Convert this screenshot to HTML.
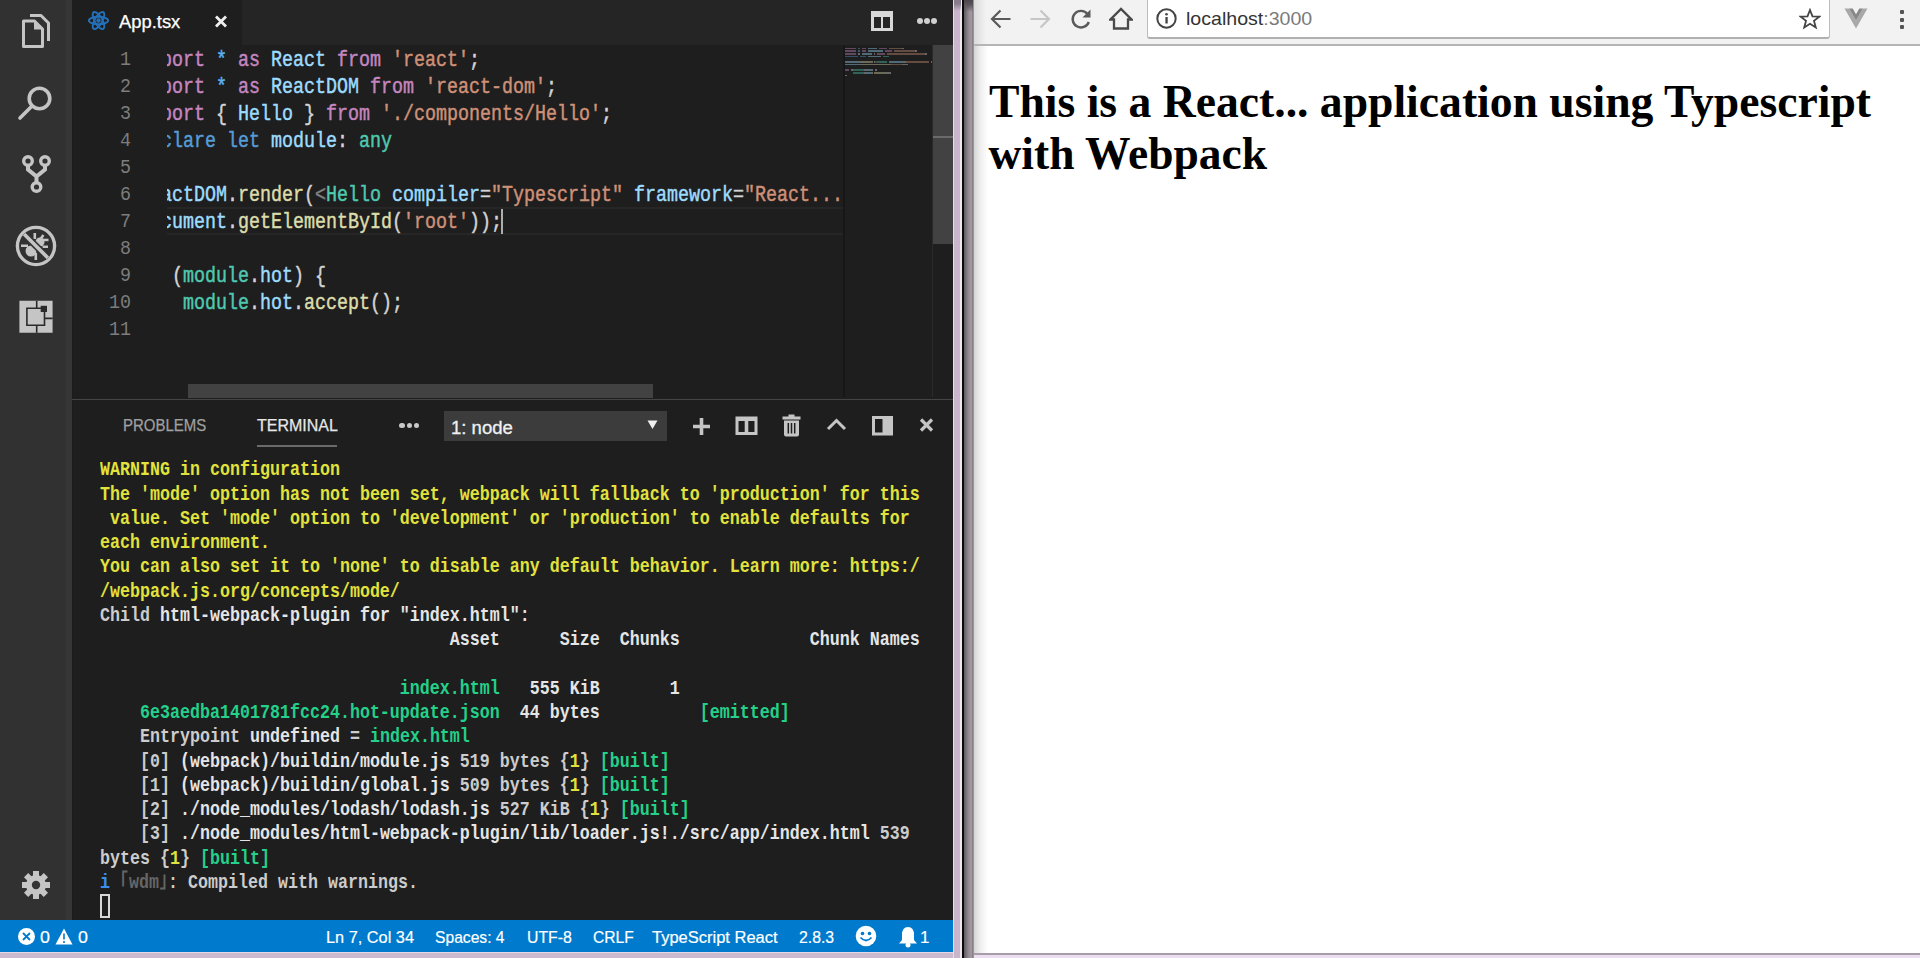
<!DOCTYPE html>
<html><head><meta charset="utf-8"><style>*{margin:0;padding:0;box-sizing:border-box}
html,body{width:1920px;height:958px;overflow:hidden;background:#d6c6da}
.a{position:absolute}
.k{color:#c586c0}.b{color:#569cd6}.v{color:#9cdcfe}.s{color:#ce9178}.p{color:#d4d4d4}.t{color:#4ec9b0}.f{color:#dcdcaa}.g{color:#808080}.o{color:#5cb0f0}
.y{color:#e2e23c}.gr{color:#23d18b}.w{color:#e5e5e5}.n{color:#cccccc}.bl{color:#3b8eea}.dg{color:#666666}
</style></head><body>
<div class="a" style="left:0;top:0;width:953px;height:952px;background:#1e1e1e;overflow:hidden">
<div class="a" style="left:0px;top:0px;width:66px;height:920px;background:#333333;"></div>
<div class="a" style="left:0px;top:0px;width:66px;height:920px;background:#313131;"></div>
<div class="a" style="left:66px;top:0px;width:6px;height:920px;background:#363636;"></div>
<div class="a" style="left:72px;top:45px;width:1px;height:875px;background:#1b1b1b;"></div>
<div class="a" style="left:72px;top:0px;width:881px;height:45px;background:#252526;"></div>
<div class="a" style="left:72px;top:0px;width:170px;height:45px;background:#1e1e1e;"></div>
<div class="a" style="left:120.00px;top:51.76px;font:400 18.333px/18.333px 'Liberation Mono',monospace;color:#7d7d7d;white-space:pre;transform:scale(1.0,1.1);transform-origin:0 14.04px;">1</div>
<div class="a" style="left:120.00px;top:78.76px;font:400 18.333px/18.333px 'Liberation Mono',monospace;color:#7d7d7d;white-space:pre;transform:scale(1.0,1.1);transform-origin:0 14.04px;">2</div>
<div class="a" style="left:120.00px;top:105.76px;font:400 18.333px/18.333px 'Liberation Mono',monospace;color:#7d7d7d;white-space:pre;transform:scale(1.0,1.1);transform-origin:0 14.04px;">3</div>
<div class="a" style="left:120.00px;top:132.76px;font:400 18.333px/18.333px 'Liberation Mono',monospace;color:#7d7d7d;white-space:pre;transform:scale(1.0,1.1);transform-origin:0 14.04px;">4</div>
<div class="a" style="left:120.00px;top:159.76px;font:400 18.333px/18.333px 'Liberation Mono',monospace;color:#7d7d7d;white-space:pre;transform:scale(1.0,1.1);transform-origin:0 14.04px;">5</div>
<div class="a" style="left:120.00px;top:186.76px;font:400 18.333px/18.333px 'Liberation Mono',monospace;color:#7d7d7d;white-space:pre;transform:scale(1.0,1.1);transform-origin:0 14.04px;">6</div>
<div class="a" style="left:120.00px;top:213.76px;font:400 18.333px/18.333px 'Liberation Mono',monospace;color:#7d7d7d;white-space:pre;transform:scale(1.0,1.1);transform-origin:0 14.04px;">7</div>
<div class="a" style="left:120.00px;top:240.76px;font:400 18.333px/18.333px 'Liberation Mono',monospace;color:#7d7d7d;white-space:pre;transform:scale(1.0,1.1);transform-origin:0 14.04px;">8</div>
<div class="a" style="left:120.00px;top:267.76px;font:400 18.333px/18.333px 'Liberation Mono',monospace;color:#7d7d7d;white-space:pre;transform:scale(1.0,1.1);transform-origin:0 14.04px;">9</div>
<div class="a" style="left:109.00px;top:294.76px;font:400 18.333px/18.333px 'Liberation Mono',monospace;color:#7d7d7d;white-space:pre;transform:scale(1.0,1.1);transform-origin:0 14.04px;">10</div>
<div class="a" style="left:109.00px;top:321.76px;font:400 18.333px/18.333px 'Liberation Mono',monospace;color:#7d7d7d;white-space:pre;transform:scale(1.0,1.1);transform-origin:0 14.04px;">11</div>
<div class="a" style="left:167px;top:207px;width:676px;height:2px;background:#262626;"></div>
<div class="a" style="left:167px;top:233px;width:676px;height:2px;background:#262626;"></div>
<div class="a" style="left:167px;top:45px;width:676px;height:339px;overflow:hidden">
<div class="a" style="left:-28.00px;top:8.36px;font:400 18.333px/18.333px 'Liberation Mono',monospace;color:#d4d4d4;white-space:pre;transform:scale(1.0,1.17);transform-origin:0 14.04px;-webkit-text-stroke:0.4px currentColor;"><span class="k">import</span> <span class="o">*</span> <span class="k">as</span> <span class="v">React</span> <span class="k">from</span> <span class="s">'react'</span><span class="p">;</span></div>
<div class="a" style="left:-28.00px;top:35.36px;font:400 18.333px/18.333px 'Liberation Mono',monospace;color:#d4d4d4;white-space:pre;transform:scale(1.0,1.17);transform-origin:0 14.04px;-webkit-text-stroke:0.4px currentColor;"><span class="k">import</span> <span class="o">*</span> <span class="k">as</span> <span class="v">ReactDOM</span> <span class="k">from</span> <span class="s">'react-dom'</span><span class="p">;</span></div>
<div class="a" style="left:-28.00px;top:62.36px;font:400 18.333px/18.333px 'Liberation Mono',monospace;color:#d4d4d4;white-space:pre;transform:scale(1.0,1.17);transform-origin:0 14.04px;-webkit-text-stroke:0.4px currentColor;"><span class="k">import</span> <span class="p">{</span> <span class="v">Hello</span> <span class="p">}</span> <span class="k">from</span> <span class="s">'./components/Hello'</span><span class="p">;</span></div>
<div class="a" style="left:-28.00px;top:89.36px;font:400 18.333px/18.333px 'Liberation Mono',monospace;color:#d4d4d4;white-space:pre;transform:scale(1.0,1.17);transform-origin:0 14.04px;-webkit-text-stroke:0.4px currentColor;"><span class="b">declare</span> <span class="b">let</span> <span class="v">module</span><span class="p">:</span> <span class="t">any</span></div>
<div class="a" style="left:-28.00px;top:116.36px;font:400 18.333px/18.333px 'Liberation Mono',monospace;color:#d4d4d4;white-space:pre;transform:scale(1.0,1.17);transform-origin:0 14.04px;-webkit-text-stroke:0.4px currentColor;"></div>
<div class="a" style="left:-28.00px;top:143.36px;font:400 18.333px/18.333px 'Liberation Mono',monospace;color:#d4d4d4;white-space:pre;transform:scale(1.0,1.17);transform-origin:0 14.04px;-webkit-text-stroke:0.4px currentColor;"><span class="v">ReactDOM</span><span class="p">.</span><span class="f">render</span><span class="p">(</span><span class="g">&lt;</span><span class="t">Hello</span> <span class="v">compiler</span><span class="p">=</span><span class="s">"Typescript"</span> <span class="v">framework</span><span class="p">=</span><span class="s">"React..."</span> <span class="g">/&gt;</span><span class="p">,</span></div>
<div class="a" style="left:-28.00px;top:170.36px;font:400 18.333px/18.333px 'Liberation Mono',monospace;color:#d4d4d4;white-space:pre;transform:scale(1.0,1.17);transform-origin:0 14.04px;-webkit-text-stroke:0.4px currentColor;"><span class="v">document</span><span class="p">.</span><span class="f">getElementById</span><span class="p">(</span><span class="s">'root'</span><span class="p">));</span></div>
<div class="a" style="left:-28.00px;top:197.36px;font:400 18.333px/18.333px 'Liberation Mono',monospace;color:#d4d4d4;white-space:pre;transform:scale(1.0,1.17);transform-origin:0 14.04px;-webkit-text-stroke:0.4px currentColor;"></div>
<div class="a" style="left:-28.00px;top:224.36px;font:400 18.333px/18.333px 'Liberation Mono',monospace;color:#d4d4d4;white-space:pre;transform:scale(1.0,1.17);transform-origin:0 14.04px;-webkit-text-stroke:0.4px currentColor;"><span class="k">if</span> <span class="p">(</span><span class="t">module</span><span class="p">.</span><span class="v">hot</span><span class="p">)</span> <span class="p">{</span></div>
<div class="a" style="left:-28.00px;top:251.36px;font:400 18.333px/18.333px 'Liberation Mono',monospace;color:#d4d4d4;white-space:pre;transform:scale(1.0,1.17);transform-origin:0 14.04px;-webkit-text-stroke:0.4px currentColor;">    <span class="t">module</span><span class="p">.</span><span class="v">hot</span><span class="p">.</span><span class="f">accept</span><span class="p">();</span></div>
<div class="a" style="left:-28.00px;top:278.36px;font:400 18.333px/18.333px 'Liberation Mono',monospace;color:#d4d4d4;white-space:pre;transform:scale(1.0,1.17);transform-origin:0 14.04px;-webkit-text-stroke:0.4px currentColor;"><span class="p">}</span></div>
</div>
<div class="a" style="left:501px;top:209px;width:2px;height:25px;background:#aeafad;"></div>
<div class="a" style="left:843px;top:45px;width:2px;height:352px;background:#171717;"></div>
<div class="a" style="left:932px;top:45px;width:1px;height:352px;background:#2a2a2a;"></div>
<div class="a" style="left:933px;top:45px;width:20px;height:199px;background:#424242;"></div>
<div class="a" style="left:933px;top:136px;width:20px;height:2px;background:#6a6a6a;"></div>
<div class="a" style="left:188px;top:384px;width:465px;height:14px;background:#424242;"></div>
<div class="a" style="left:72px;top:399px;width:881px;height:1px;background:#454545;"></div>
<div class="a" style="left:0px;top:920px;width:953px;height:32px;background:#007acc;"></div>
<div class="a" style="left:118.50px;top:14.48px;font:400 17.5px/17.5px 'Liberation Sans',sans-serif;color:#ffffff;white-space:pre;transform:scale(1.05,1.0);transform-origin:0 14.82px;-webkit-text-stroke:0.25px currentColor;">App.tsx</div>
<svg class="a" style="left:87px;top:10px" width="23" height="21" viewBox="-11.5 -10.5 23 21"><g fill="none" stroke="#2470b8" stroke-width="1.9"><ellipse rx="9.6" ry="3.8"/><ellipse rx="9.6" ry="3.8" transform="rotate(60)"/><ellipse rx="9.6" ry="3.8" transform="rotate(120)"/></g><circle r="2.2" fill="#2470b8"/></svg>
<svg class="a" style="left:214px;top:15px" width="14" height="13" viewBox="0 0 14 13"><path d="M2 1.5L12 11.5M12 1.5L2 11.5" stroke="#f0f0f0" stroke-width="2.8"/></svg>
<svg class="a" style="left:871px;top:11px" width="22" height="20" viewBox="0 0 22 20"><path fill="#d8d8d8" fill-rule="evenodd" d="M0 0H22V20H0Z M3 6H10V17H3Z M12 6H19V17H12Z"/></svg>
<div class="a" style="left:916.5px;top:17.5px;width:6px;height:6px;background:#d0d0d0;border-radius:50%;"></div>
<div class="a" style="left:923.8px;top:17.5px;width:6px;height:6px;background:#d0d0d0;border-radius:50%;"></div>
<div class="a" style="left:931px;top:17.5px;width:6px;height:6px;background:#d0d0d0;border-radius:50%;"></div>
<svg class="a" style="left:18px;top:10px" width="36" height="42" viewBox="0 0 36 42"><g fill="none" stroke="#c5c5c5" stroke-width="3" stroke-linejoin="round"><path d="M5.5 11H16.5L24.5 19V36.5H5.5Z"/><path d="M12 5.5H23L30.5 13V31"/></g><path d="M16 11V19.5H24.5Z" fill="#c5c5c5"/></svg>
<svg class="a" style="left:16px;top:83px" width="40" height="40" viewBox="0 0 40 40"><g fill="none" stroke="#c5c5c5" stroke-width="3.6" stroke-linecap="round"><circle cx="23.5" cy="15.5" r="10.3"/><path d="M16 23L4 35"/></g></svg>
<svg class="a" style="left:20px;top:153px" width="34" height="44" viewBox="0 0 34 44"><g fill="none" stroke="#c5c5c5" stroke-width="3.4"><circle cx="8" cy="8" r="4.3"/><circle cx="25" cy="8" r="4.3"/><circle cx="16.5" cy="34" r="4.3"/></g><path d="M8 12.3V16.5L16.5 23.5V29.7M25 12.3V16.5L16.5 23.5" fill="none" stroke="#c5c5c5" stroke-width="4"/></svg>
<svg class="a" style="left:13px;top:223px" width="46" height="46" viewBox="-23 -23 46 46"><defs><clipPath id="dbgc"><circle r="16.8"/></clipPath></defs><circle r="18.6" fill="none" stroke="#c5c5c5" stroke-width="3.4"/><g fill="#c5c5c5"><ellipse cx="-5" cy="5" rx="5.5" ry="5.5"/><ellipse cx="4" cy="-4" rx="4.5" ry="4.5"/><rect x="-2.5" y="-13" width="2.6" height="6"/><rect x="4.5" y="-11.5" width="2.6" height="5.5" transform="rotate(35 5.8 -8.7)"/><rect x="7" y="-7.3" width="5.5" height="2.5"/><rect x="6.5" y="-0.5" width="5.5" height="2.5"/><rect x="-1.5" y="7" width="2.6" height="7"/><rect x="-15" y="-1.5" width="7" height="2.5"/></g><g clip-path="url(#dbgc)"><path d="M-16 -16L16 16" stroke="#333" stroke-width="6.8"/><path d="M-16 -16L16 16" stroke="#c5c5c5" stroke-width="3.6"/></g></svg>
<svg class="a" style="left:18px;top:299px" width="36" height="36" viewBox="0 0 36 36"><path fill="#c5c5c5" d="M1.4 1.8H34.6V33.8H1.4Z"/><g stroke="#2a2a2a" stroke-width="1.6" fill="none"><path d="M18.7 1.8V9.3M18.7 26.3V33.8M26.5 19.4H34.6"/><path d="M8.9 9.3H26.5V26.3H8.9Z"/></g><path fill="#2a2a2a" d="M22.7 6.8H29V13H22.7Z"/></svg>
<svg class="a" style="left:21px;top:870px" width="30" height="30" viewBox="-15 -15 30 30"><g fill="#c5c5c5"><circle r="10"/><rect x="-3" y="-14" width="6" height="7" transform="rotate(0)"/><rect x="-3" y="-14" width="6" height="7" transform="rotate(45)"/><rect x="-3" y="-14" width="6" height="7" transform="rotate(90)"/><rect x="-3" y="-14" width="6" height="7" transform="rotate(135)"/><rect x="-3" y="-14" width="6" height="7" transform="rotate(180)"/><rect x="-3" y="-14" width="6" height="7" transform="rotate(225)"/><rect x="-3" y="-14" width="6" height="7" transform="rotate(270)"/><rect x="-3" y="-14" width="6" height="7" transform="rotate(315)"/></g><circle r="4.2" fill="#333"/></svg>
<div class="a" style="left:123.00px;top:417.11px;font:400 17px/17px 'Liberation Sans',sans-serif;color:#a0a0a0;white-space:pre;transform:scale(0.88,1.0);transform-origin:0 14.39px;-webkit-text-stroke:0.25px currentColor;">PROBLEMS</div>
<div class="a" style="left:257.00px;top:417.11px;font:400 17px/17px 'Liberation Sans',sans-serif;color:#e7e7e7;white-space:pre;transform:scale(0.94,1.0);transform-origin:0 14.39px;-webkit-text-stroke:0.25px currentColor;">TERMINAL</div>
<div class="a" style="left:257px;top:445px;width:80px;height:1.5px;background:#6a6a6a;"></div>
<div class="a" style="left:399.2px;top:422.5px;width:5.6px;height:5.6px;background:#c8c8c8;border-radius:50%;"></div>
<div class="a" style="left:406.5px;top:422.5px;width:5.6px;height:5.6px;background:#c8c8c8;border-radius:50%;"></div>
<div class="a" style="left:413.8px;top:422.5px;width:5.6px;height:5.6px;background:#c8c8c8;border-radius:50%;"></div>
<div class="a" style="left:444px;top:411px;width:223px;height:30px;background:#3c3c3c;"></div>
<div class="a" style="left:451.00px;top:419.58px;font:400 17.5px/17.5px 'Liberation Sans',sans-serif;color:#f0f0f0;white-space:pre;transform:scale(1.06,1.0);transform-origin:0 14.82px;-webkit-text-stroke:0.3px currentColor;">1: node</div>
<svg class="a" style="left:647px;top:420px" width="11" height="10" viewBox="0 0 11 10"><path d="M0.5 0.5H10.5L5.5 9Z" fill="#f0f0f0"/></svg>
<svg class="a" style="left:692px;top:417px" width="19" height="19" viewBox="0 0 19 19"><path d="M9.5 1V18M1 9.5H18" stroke="#c5c5c5" stroke-width="3.6"/></svg>
<svg class="a" style="left:735px;top:416px" width="23" height="20" viewBox="0 0 23 20"><path fill="#c5c5c5" fill-rule="evenodd" d="M0.5 0.5H22.5V19H0.5Z M3.5 5H9.7V16H3.5Z M13.3 5H19.5V16H13.3Z"/></svg>
<svg class="a" style="left:782px;top:414px" width="19" height="23" viewBox="0 0 19 23"><path fill="#c5c5c5" d="M6.5 0.5H12.5V2.5H18.5V5.5H0.5V2.5H6.5Z M2 6.5H17V20.5Q17 22.5 15 22.5H4Q2 22.5 2 20.5Z"/><path d="M6.3 9V19.5M9.5 9V19.5M12.7 9V19.5" stroke="#1e1e1e" stroke-width="1.5"/></svg>
<svg class="a" style="left:826px;top:416px" width="21" height="15" viewBox="0 0 21 15"><path d="M2 13L10.5 4.5L19 13" fill="none" stroke="#c5c5c5" stroke-width="3"/></svg>
<svg class="a" style="left:872px;top:416px" width="21" height="20" viewBox="0 0 21 20"><path fill="#c5c5c5" fill-rule="evenodd" d="M0 0H21V19.5H0Z M3 3H10.5V16.5H3Z"/></svg>
<svg class="a" style="left:919px;top:418px" width="15" height="14" viewBox="0 0 15 14"><path d="M2 1.5L13 12.5M13 1.5L2 12.5" stroke="#c5c5c5" stroke-width="3.2"/></svg>
<div class="a" style="left:100.00px;top:463.43px;font:700 16.667px/16.667px 'Liberation Mono',monospace;color:#cccccc;white-space:pre;transform:scale(1.0,1.18);transform-origin:0 12.77px;"><span class="y">WARNING in configuration</span></div>
<div class="a" style="left:100.00px;top:487.69px;font:700 16.667px/16.667px 'Liberation Mono',monospace;color:#cccccc;white-space:pre;transform:scale(1.0,1.18);transform-origin:0 12.77px;"><span class="y">The 'mode' option has not been set, webpack will fallback to 'production' for this</span></div>
<div class="a" style="left:100.00px;top:511.95px;font:700 16.667px/16.667px 'Liberation Mono',monospace;color:#cccccc;white-space:pre;transform:scale(1.0,1.18);transform-origin:0 12.77px;"><span class="y"> value. Set 'mode' option to 'development' or 'production' to enable defaults for</span></div>
<div class="a" style="left:100.00px;top:536.21px;font:700 16.667px/16.667px 'Liberation Mono',monospace;color:#cccccc;white-space:pre;transform:scale(1.0,1.18);transform-origin:0 12.77px;"><span class="y">each environment.</span></div>
<div class="a" style="left:100.00px;top:560.47px;font:700 16.667px/16.667px 'Liberation Mono',monospace;color:#cccccc;white-space:pre;transform:scale(1.0,1.18);transform-origin:0 12.77px;"><span class="y">You can also set it to 'none' to disable any default behavior. Learn more: https:/</span></div>
<div class="a" style="left:100.00px;top:584.73px;font:700 16.667px/16.667px 'Liberation Mono',monospace;color:#cccccc;white-space:pre;transform:scale(1.0,1.18);transform-origin:0 12.77px;"><span class="y">/webpack.js.org/concepts/mode/</span></div>
<div class="a" style="left:100.00px;top:608.99px;font:700 16.667px/16.667px 'Liberation Mono',monospace;color:#cccccc;white-space:pre;transform:scale(1.0,1.18);transform-origin:0 12.77px;"><span class="n">Child </span><span class="w">html-webpack-plugin for "index.html":</span></div>
<div class="a" style="left:100.00px;top:633.25px;font:700 16.667px/16.667px 'Liberation Mono',monospace;color:#cccccc;white-space:pre;transform:scale(1.0,1.18);transform-origin:0 12.77px;"><span class="w">                                   Asset      Size  Chunks             Chunk Names</span></div>
<div class="a" style="left:100.00px;top:681.77px;font:700 16.667px/16.667px 'Liberation Mono',monospace;color:#cccccc;white-space:pre;transform:scale(1.0,1.18);transform-origin:0 12.77px;"><span class="gr">                              index.html</span><span class="w">   555 KiB       1</span></div>
<div class="a" style="left:100.00px;top:706.03px;font:700 16.667px/16.667px 'Liberation Mono',monospace;color:#cccccc;white-space:pre;transform:scale(1.0,1.18);transform-origin:0 12.77px;"><span class="gr">    6e3aedba1401781fcc24.hot-update.json</span><span class="w">  44 bytes          </span><span class="gr">[emitted]</span></div>
<div class="a" style="left:100.00px;top:730.29px;font:700 16.667px/16.667px 'Liberation Mono',monospace;color:#cccccc;white-space:pre;transform:scale(1.0,1.18);transform-origin:0 12.77px;"><span class="n">    Entrypoint </span><span class="w">undefined</span><span class="n"> = </span><span class="gr">index.html</span></div>
<div class="a" style="left:100.00px;top:754.55px;font:700 16.667px/16.667px 'Liberation Mono',monospace;color:#cccccc;white-space:pre;transform:scale(1.0,1.18);transform-origin:0 12.77px;"><span class="n">    [0] </span><span class="w">(webpack)/buildin/module.js</span><span class="n"> 519 bytes {</span><span class="y">1</span><span class="n">} </span><span class="gr">[built]</span></div>
<div class="a" style="left:100.00px;top:778.81px;font:700 16.667px/16.667px 'Liberation Mono',monospace;color:#cccccc;white-space:pre;transform:scale(1.0,1.18);transform-origin:0 12.77px;"><span class="n">    [1] </span><span class="w">(webpack)/buildin/global.js</span><span class="n"> 509 bytes {</span><span class="y">1</span><span class="n">} </span><span class="gr">[built]</span></div>
<div class="a" style="left:100.00px;top:803.07px;font:700 16.667px/16.667px 'Liberation Mono',monospace;color:#cccccc;white-space:pre;transform:scale(1.0,1.18);transform-origin:0 12.77px;"><span class="n">    [2] </span><span class="w">./node_modules/lodash/lodash.js</span><span class="n"> 527 KiB {</span><span class="y">1</span><span class="n">} </span><span class="gr">[built]</span></div>
<div class="a" style="left:100.00px;top:827.33px;font:700 16.667px/16.667px 'Liberation Mono',monospace;color:#cccccc;white-space:pre;transform:scale(1.0,1.18);transform-origin:0 12.77px;"><span class="n">    [3] </span><span class="w">./node_modules/html-webpack-plugin/lib/loader.js!./src/app/index.html</span><span class="n"> 539</span></div>
<div class="a" style="left:100.00px;top:851.59px;font:700 16.667px/16.667px 'Liberation Mono',monospace;color:#cccccc;white-space:pre;transform:scale(1.0,1.18);transform-origin:0 12.77px;"><span class="n">bytes {</span><span class="y">1</span><span class="n">} </span><span class="gr">[built]</span></div>
<div class="a" style="left:100.00px;top:875.85px;font:700 16.667px/16.667px 'Liberation Mono',monospace;color:#cccccc;white-space:pre;transform:scale(1.0,1.18);transform-origin:0 12.77px;"><span class="bl">i</span> <span class="dg">｢wdm｣</span><span class="n">: Compiled with warnings.</span></div>
<div class="a" style="left:100px;top:893.5px;width:10px;height:24.5px;background:transparent;border:2px solid #d8d8d8;"></div>
<svg class="a" style="left:17px;top:927px" width="19" height="19" viewBox="0 0 19 19"><circle cx="9.5" cy="9.5" r="8.5" fill="#fff"/><path d="M6 6L13 13M13 6L6 13" stroke="#007acc" stroke-width="1.8"/></svg>
<div class="a" style="left:39.50px;top:928.91px;font:400 17px/17px 'Liberation Sans',sans-serif;color:#ffffff;white-space:pre;transform:scale(1.05,1.0);transform-origin:0 14.39px;-webkit-text-stroke:0.2px currentColor;">0</div>
<svg class="a" style="left:55px;top:928px" width="18" height="17" viewBox="0 0 18 17"><path d="M9 0.5L17.5 16.5H0.5Z" fill="#fff"/><path d="M9 5.5V11.5M9 13V15" stroke="#007acc" stroke-width="1.6"/></svg>
<div class="a" style="left:77.50px;top:928.91px;font:400 17px/17px 'Liberation Sans',sans-serif;color:#ffffff;white-space:pre;transform:scale(1.05,1.0);transform-origin:0 14.39px;-webkit-text-stroke:0.2px currentColor;">0</div>
<div class="a" style="left:325.50px;top:928.91px;font:400 17px/17px 'Liberation Sans',sans-serif;color:#ffffff;white-space:pre;transform:scale(0.96,1.0);transform-origin:0 14.39px;-webkit-text-stroke:0.2px currentColor;">Ln 7, Col 34</div>
<div class="a" style="left:435.00px;top:928.91px;font:400 17px/17px 'Liberation Sans',sans-serif;color:#ffffff;white-space:pre;transform:scale(0.92,1.0);transform-origin:0 14.39px;-webkit-text-stroke:0.2px currentColor;">Spaces: 4</div>
<div class="a" style="left:526.50px;top:928.91px;font:400 17px/17px 'Liberation Sans',sans-serif;color:#ffffff;white-space:pre;transform:scale(0.93,1.0);transform-origin:0 14.39px;-webkit-text-stroke:0.2px currentColor;">UTF-8</div>
<div class="a" style="left:593.00px;top:928.91px;font:400 17px/17px 'Liberation Sans',sans-serif;color:#ffffff;white-space:pre;transform:scale(0.92,1.0);transform-origin:0 14.39px;-webkit-text-stroke:0.2px currentColor;">CRLF</div>
<div class="a" style="left:652.00px;top:928.91px;font:400 17px/17px 'Liberation Sans',sans-serif;color:#ffffff;white-space:pre;transform:scale(0.97,1.0);transform-origin:0 14.39px;-webkit-text-stroke:0.2px currentColor;">TypeScript React</div>
<div class="a" style="left:799.00px;top:928.91px;font:400 17px/17px 'Liberation Sans',sans-serif;color:#ffffff;white-space:pre;transform:scale(0.93,1.0);transform-origin:0 14.39px;-webkit-text-stroke:0.2px currentColor;">2.8.3</div>
<svg class="a" style="left:855px;top:925px" width="22" height="22" viewBox="0 0 22 22"><circle cx="11" cy="11" r="10.3" fill="#fff"/><circle cx="7.5" cy="8.5" r="1.8" fill="#007acc"/><circle cx="14.5" cy="8.5" r="1.8" fill="#007acc"/><path d="M5.5 12.5Q11 18.5 16.5 12.5" fill="none" stroke="#007acc" stroke-width="1.8"/></svg>
<svg class="a" style="left:898px;top:926px" width="20" height="22" viewBox="0 0 20 22"><path d="M10 1Q16 1 16 9V14L19 17.5H1L4 14V9Q4 1 10 1Z" fill="#fff"/><circle cx="10" cy="19" r="2.5" fill="#fff"/></svg>
<div class="a" style="left:920.00px;top:928.91px;font:400 17px/17px 'Liberation Sans',sans-serif;color:#ffffff;white-space:pre;-webkit-text-stroke:0.2px currentColor;">1</div>
<div class="a" style="left:845px;top:45px;width:87px;height:352px;overflow:hidden"><div class="a" style="left:0.0px;top:2.5px;width:11.4px;height:1.8px;background:#c586c0;opacity:.4"></div><div class="a" style="left:13.3px;top:2.5px;width:1.9px;height:1.8px;background:#5cb0f0;opacity:.4"></div><div class="a" style="left:17.1px;top:2.5px;width:3.8px;height:1.8px;background:#c586c0;opacity:.4"></div><div class="a" style="left:22.8px;top:2.5px;width:9.5px;height:1.8px;background:#9cdcfe;opacity:.4"></div><div class="a" style="left:34.2px;top:2.5px;width:7.6px;height:1.8px;background:#c586c0;opacity:.4"></div><div class="a" style="left:43.7px;top:2.5px;width:13.3px;height:1.8px;background:#ce9178;opacity:.4"></div><div class="a" style="left:57.0px;top:2.5px;width:1.9px;height:1.8px;background:#d4d4d4;opacity:.4"></div><div class="a" style="left:0.0px;top:5.2px;width:11.4px;height:1.8px;background:#c586c0;opacity:.4"></div><div class="a" style="left:13.3px;top:5.2px;width:1.9px;height:1.8px;background:#5cb0f0;opacity:.4"></div><div class="a" style="left:17.1px;top:5.2px;width:3.8px;height:1.8px;background:#c586c0;opacity:.4"></div><div class="a" style="left:22.8px;top:5.2px;width:15.2px;height:1.8px;background:#9cdcfe;opacity:.4"></div><div class="a" style="left:39.9px;top:5.2px;width:7.6px;height:1.8px;background:#c586c0;opacity:.4"></div><div class="a" style="left:49.4px;top:5.2px;width:20.9px;height:1.8px;background:#ce9178;opacity:.4"></div><div class="a" style="left:70.3px;top:5.2px;width:1.9px;height:1.8px;background:#d4d4d4;opacity:.4"></div><div class="a" style="left:0.0px;top:7.9px;width:11.4px;height:1.8px;background:#c586c0;opacity:.4"></div><div class="a" style="left:13.3px;top:7.9px;width:1.9px;height:1.8px;background:#d4d4d4;opacity:.4"></div><div class="a" style="left:17.1px;top:7.9px;width:9.5px;height:1.8px;background:#9cdcfe;opacity:.4"></div><div class="a" style="left:28.5px;top:7.9px;width:1.9px;height:1.8px;background:#d4d4d4;opacity:.4"></div><div class="a" style="left:32.3px;top:7.9px;width:7.6px;height:1.8px;background:#c586c0;opacity:.4"></div><div class="a" style="left:41.8px;top:7.9px;width:38.0px;height:1.8px;background:#ce9178;opacity:.4"></div><div class="a" style="left:79.8px;top:7.9px;width:1.9px;height:1.8px;background:#d4d4d4;opacity:.4"></div><div class="a" style="left:0.0px;top:10.6px;width:13.3px;height:1.8px;background:#569cd6;opacity:.4"></div><div class="a" style="left:15.2px;top:10.6px;width:5.7px;height:1.8px;background:#569cd6;opacity:.4"></div><div class="a" style="left:22.8px;top:10.6px;width:11.4px;height:1.8px;background:#9cdcfe;opacity:.4"></div><div class="a" style="left:34.2px;top:10.6px;width:1.9px;height:1.8px;background:#d4d4d4;opacity:.4"></div><div class="a" style="left:38.0px;top:10.6px;width:5.7px;height:1.8px;background:#4ec9b0;opacity:.4"></div><div class="a" style="left:0.0px;top:16.0px;width:15.2px;height:1.8px;background:#9cdcfe;opacity:.4"></div><div class="a" style="left:15.2px;top:16.0px;width:1.9px;height:1.8px;background:#d4d4d4;opacity:.4"></div><div class="a" style="left:17.1px;top:16.0px;width:11.4px;height:1.8px;background:#dcdcaa;opacity:.4"></div><div class="a" style="left:28.5px;top:16.0px;width:1.9px;height:1.8px;background:#d4d4d4;opacity:.4"></div><div class="a" style="left:30.4px;top:16.0px;width:1.9px;height:1.8px;background:#808080;opacity:.4"></div><div class="a" style="left:32.3px;top:16.0px;width:9.5px;height:1.8px;background:#4ec9b0;opacity:.4"></div><div class="a" style="left:43.7px;top:16.0px;width:15.2px;height:1.8px;background:#9cdcfe;opacity:.4"></div><div class="a" style="left:58.9px;top:16.0px;width:1.9px;height:1.8px;background:#d4d4d4;opacity:.4"></div><div class="a" style="left:60.8px;top:16.0px;width:22.8px;height:1.8px;background:#ce9178;opacity:.4"></div><div class="a" style="left:85.5px;top:16.0px;width:17.1px;height:1.8px;background:#9cdcfe;opacity:.4"></div><div class="a" style="left:102.6px;top:16.0px;width:1.9px;height:1.8px;background:#d4d4d4;opacity:.4"></div><div class="a" style="left:104.5px;top:16.0px;width:19.0px;height:1.8px;background:#ce9178;opacity:.4"></div><div class="a" style="left:125.4px;top:16.0px;width:3.8px;height:1.8px;background:#808080;opacity:.4"></div><div class="a" style="left:129.2px;top:16.0px;width:1.9px;height:1.8px;background:#d4d4d4;opacity:.4"></div><div class="a" style="left:0.0px;top:18.7px;width:15.2px;height:1.8px;background:#9cdcfe;opacity:.4"></div><div class="a" style="left:15.2px;top:18.7px;width:1.9px;height:1.8px;background:#d4d4d4;opacity:.4"></div><div class="a" style="left:17.1px;top:18.7px;width:26.6px;height:1.8px;background:#dcdcaa;opacity:.4"></div><div class="a" style="left:43.7px;top:18.7px;width:1.9px;height:1.8px;background:#d4d4d4;opacity:.4"></div><div class="a" style="left:45.6px;top:18.7px;width:11.4px;height:1.8px;background:#ce9178;opacity:.4"></div><div class="a" style="left:57.0px;top:18.7px;width:5.7px;height:1.8px;background:#d4d4d4;opacity:.4"></div><div class="a" style="left:0.0px;top:24.1px;width:3.8px;height:1.8px;background:#c586c0;opacity:.4"></div><div class="a" style="left:5.7px;top:24.1px;width:1.9px;height:1.8px;background:#d4d4d4;opacity:.4"></div><div class="a" style="left:7.6px;top:24.1px;width:11.4px;height:1.8px;background:#4ec9b0;opacity:.4"></div><div class="a" style="left:19.0px;top:24.1px;width:1.9px;height:1.8px;background:#d4d4d4;opacity:.4"></div><div class="a" style="left:20.9px;top:24.1px;width:5.7px;height:1.8px;background:#9cdcfe;opacity:.4"></div><div class="a" style="left:26.6px;top:24.1px;width:1.9px;height:1.8px;background:#d4d4d4;opacity:.4"></div><div class="a" style="left:30.4px;top:24.1px;width:1.9px;height:1.8px;background:#d4d4d4;opacity:.4"></div><div class="a" style="left:7.6px;top:26.8px;width:11.4px;height:1.8px;background:#4ec9b0;opacity:.4"></div><div class="a" style="left:19.0px;top:26.8px;width:1.9px;height:1.8px;background:#d4d4d4;opacity:.4"></div><div class="a" style="left:20.9px;top:26.8px;width:5.7px;height:1.8px;background:#9cdcfe;opacity:.4"></div><div class="a" style="left:26.6px;top:26.8px;width:1.9px;height:1.8px;background:#d4d4d4;opacity:.4"></div><div class="a" style="left:28.5px;top:26.8px;width:11.4px;height:1.8px;background:#dcdcaa;opacity:.4"></div><div class="a" style="left:39.9px;top:26.8px;width:5.7px;height:1.8px;background:#d4d4d4;opacity:.4"></div><div class="a" style="left:0.0px;top:29.5px;width:1.9px;height:1.8px;background:#d4d4d4;opacity:.4"></div></div>
</div>
<div class="a" style="left:953px;top:0;width:21px;height:958px;background:linear-gradient(90deg,#e8dcea 0,#e8dcea 1px,#c9b6cd 1px,#c9b6cd 7px,#efe6f0 7px,#efe6f0 9px,#0a0a0a 9px,#0a0a0a 11px,#5e5a5e 11px,#9a8e98 16px,#a39aa3 19px,#6a666a 20px,#c8c8c8 21px)"></div>
<div class="a" style="left:954px;top:0px;width:7px;height:11px;background:linear-gradient(180deg,#857a8a 0,#8a7e8e 35%,rgba(201,182,205,0) 100%);"></div>
<div class="a" style="left:964px;top:0px;width:9px;height:12px;background:linear-gradient(180deg,#4c464c 0,#5a545a 40%,rgba(94,90,94,0) 100%);"></div>
<div class="a" style="left:0px;top:952px;width:953px;height:1px;background:#e4d8e6;"></div>
<div class="a" style="left:0px;top:953px;width:953px;height:5px;background:#cbb9cf;"></div>
<div class="a" style="left:974px;top:953px;width:946px;height:2px;background:#a89ca8;"></div>
<div class="a" style="left:974px;top:955px;width:946px;height:3px;background:#eadef0;"></div>
<div class="a" style="left:974px;top:0;width:946px;height:953px;background:#fff;overflow:hidden">
<div class="a" style="left:0px;top:0px;width:946px;height:44px;background:#f2f2f2;"></div>
<div class="a" style="left:0px;top:44px;width:946px;height:1.5px;background:#b5b5b5;"></div>
<div class="a" style="left:0px;top:46px;width:14px;height:907px;background:linear-gradient(90deg,#d4d4d4,#ececec 40%,#ffffff);"></div>
<div class="a" style="left:0px;top:0px;width:12px;height:44px;background:linear-gradient(90deg,#dadada,#f2f2f2);"></div>
<svg class="a" style="left:15px;top:8px" width="23" height="22" viewBox="0 0 23 22"><path d="M21.5 11H3M11.5 2.5L3 11L11.5 19.5" fill="none" stroke="#5a5a5a" stroke-width="2.2"/></svg>
<svg class="a" style="left:55px;top:8px" width="23" height="22" viewBox="0 0 23 22"><path d="M1.5 11H20M11.5 2.5L20 11L11.5 19.5" fill="none" stroke="#c6c6c6" stroke-width="2.2"/></svg>
<svg class="a" style="left:95px;top:8px" width="24" height="22" viewBox="0 0 24 22"><path d="M18.5 6A8.3 8.3 0 1 0 19.8 14" fill="none" stroke="#5a5a5a" stroke-width="2.4"/><path d="M21.5 1.5V9.5H13.5Z" fill="#5a5a5a"/></svg>
<svg class="a" style="left:135px;top:7px" width="24" height="24" viewBox="0 0 24 24"><path d="M5 21.5V12.5H1.5L12 2L22.5 12.5H19V21.5Z" fill="none" stroke="#4a4a4a" stroke-width="2.3" stroke-linejoin="miter"/></svg>
<div class="a" style="left:173px;top:-3px;width:683px;height:42px;background:#ffffff;border:1px solid #bcbcbc;border-bottom:2px solid #b0b0b0;border-radius:3px;"></div>
<svg class="a" style="left:182px;top:8px" width="21" height="21" viewBox="0 0 21 21"><circle cx="10.5" cy="10.5" r="9.2" fill="none" stroke="#444" stroke-width="2"/><rect x="9.4" y="9" width="2.3" height="6.5" fill="#444"/><circle cx="10.5" cy="6.3" r="1.3" fill="#444"/></svg>
<div class="a" style="left:212.00px;top:9.41px;font:400 19px/19px 'Liberation Sans',sans-serif;color:#333333;white-space:pre;transform:scale(1.03,1.0);transform-origin:0 16.09px;"><span>localhost</span><span style="color:#7a7a7a">:3000</span></div>
<svg class="a" style="left:825px;top:8px" width="22" height="22" viewBox="0 0 22 22"><path d="M11 2L13.5 8.3L20.3 8.6L15 12.9L16.8 19.5L11 15.8L5.2 19.5L7 12.9L1.7 8.6L8.5 8.3Z" fill="none" stroke="#444" stroke-width="1.8" stroke-linejoin="miter"/></svg>
<svg class="a" style="left:870px;top:8px" width="24" height="21" viewBox="0 0 24 21"><path d="M0.5 0.5H5L12 12.5L19 0.5H23.5L12 20.5Z" fill="#a8a8a8"/><path d="M5 0.5H8.7L12 6.2L15.3 0.5H19L12 12.5Z" fill="#888888"/></svg>
<div class="a" style="left:926px;top:10px;width:4.2px;height:4.2px;background:#555;border-radius:1px;"></div>
<div class="a" style="left:926px;top:17.5px;width:4.2px;height:4.2px;background:#555;border-radius:1px;"></div>
<div class="a" style="left:926px;top:25px;width:4.2px;height:4.2px;background:#555;border-radius:1px;"></div>
<div class="a" style="left:14.50px;top:78.60px;font:700 45.5px/45.5px 'Liberation Serif',serif;color:#000000;white-space:pre;transform:scale(1.003,1.0);transform-origin:0 38.10px;">This is a React... application using Typescript</div>
<div class="a" style="left:14.50px;top:131.10px;font:700 45.5px/45.5px 'Liberation Serif',serif;color:#000000;white-space:pre;">with Webpack</div>
</div>
</body></html>
